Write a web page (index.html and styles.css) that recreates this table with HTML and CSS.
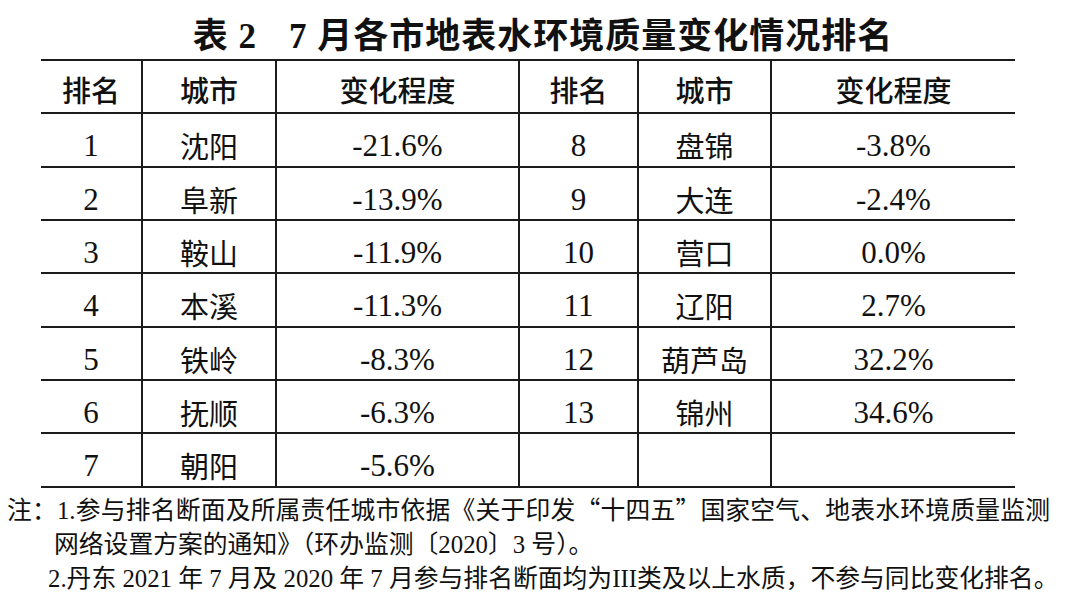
FILE: index.html
```html
<!DOCTYPE html>
<html lang="zh-CN">
<head>
<meta charset="utf-8">
<title>表2 7月各市地表水环境质量变化情况排名</title>
<link rel="stylesheet" href="styles.css">
</head>
<body>
<div class="page">
  <h1 class="title">表 2<span class="gap"></span>7 月各市地表水环境质量变化情况排名</h1>
  <table class="rank">
    <colgroup>
      <col class="c1"><col class="c2"><col class="c3"><col class="c4"><col class="c5"><col class="c6">
    </colgroup>
    <thead>
      <tr><th>排名</th><th>城市</th><th>变化程度</th><th>排名</th><th>城市</th><th>变化程度</th></tr>
    </thead>
    <tbody>
      <tr><td class="num">1</td><td class="city">沈阳</td><td class="num">-21.6%</td><td class="num">8</td><td class="city">盘锦</td><td class="num">-3.8%</td></tr>
      <tr><td class="num">2</td><td class="city">阜新</td><td class="num">-13.9%</td><td class="num">9</td><td class="city">大连</td><td class="num">-2.4%</td></tr>
      <tr><td class="num">3</td><td class="city">鞍山</td><td class="num">-11.9%</td><td class="num">10</td><td class="city">营口</td><td class="num">0.0%</td></tr>
      <tr><td class="num">4</td><td class="city">本溪</td><td class="num">-11.3%</td><td class="num">11</td><td class="city">辽阳</td><td class="num">2.7%</td></tr>
      <tr><td class="num">5</td><td class="city">铁岭</td><td class="num">-8.3%</td><td class="num">12</td><td class="city">葫芦岛</td><td class="num">32.2%</td></tr>
      <tr><td class="num">6</td><td class="city">抚顺</td><td class="num">-6.3%</td><td class="num">13</td><td class="city">锦州</td><td class="num">34.6%</td></tr>
      <tr><td class="num">7</td><td class="city">朝阳</td><td class="num">-5.6%</td><td></td><td></td><td></td></tr>
    </tbody>
  </table>
  <div class="notes">
    <div class="line first">注：1.参与排名断面及所属责任城市依据《关于印发<span class="q">“</span>十四五<span class="q">”</span>国家空气、地表水环境质量监测</div>
    <div class="line second">网络设置方案的通知》（环办监测〔2020〕3 号）。</div>
    <div class="line third">2.丹东 2021 年 7 月及 2020 年 7 月参与排名断面均为III类及以上水质，不参与同比变化排名。</div>
  </div>
</div>
</body>
</html>
```
FILE: styles.css
```css
html, body {
  margin: 0;
  padding: 0;
  background: #ffffff;
  color: #111111;
}

.page {
  width: 1080px;
  height: 605px;
  overflow: hidden;
}

.title {
  margin: 0;
  padding-top: 15px;
  height: 44px;
  line-height: 44px;
  text-align: center;
  font-family: "Liberation Serif", "Noto Sans CJK SC", serif;
  font-weight: 700;
  font-size: 35px;
  letter-spacing: 1px;
  padding-left: 6px;
}

.title .gap {
  display: inline-block;
  width: 32px;
}

.rank {
  margin-left: 41px;
  width: 974px;
  border-collapse: collapse;
  table-layout: fixed;
  font-family: "Liberation Serif", "Noto Sans CJK SC", serif;
}

.c1 { width: 101px; }
.c2 { width: 134px; }
.c3 { width: 243px; }
.c4 { width: 119px; }
.c5 { width: 133px; }
.c6 { width: 244px; }

.rank th,
.rank td {
  padding: 0;
  text-align: center;
  vertical-align: middle;
  border: 2px solid #1c1c1c;
}

.rank th:first-child,
.rank td:first-child {
  border-left: none;
}

.rank th:last-child,
.rank td:last-child {
  border-right: none;
}

.rank th {
  height: 45px;
  font-family: "Noto Sans CJK SC", sans-serif;
  font-weight: 500;
  font-size: 29px;
  line-height: 1;
  padding-top: 6px;
}

.rank td {
  height: 40px;
  padding-top: 11px;
}

.rank tbody tr:nth-child(3n+1) td {
  height: 41px;
}

.rank td.num {
  font-size: 31px;
  line-height: 1;
}

.rank td.city {
  font-family: "Noto Sans CJK SC", sans-serif;
  font-weight: 400;
  font-size: 29px;
  line-height: 1;
}

.notes {
  margin-top: 3px;
  font-family: "Liberation Serif", "Noto Sans CJK SC", serif;
  font-size: 24.8px;
  line-height: 34px;
}

.notes .q {
  font-family: "Noto Sans CJK SC", sans-serif;
}

.notes .line {
  white-space: nowrap;
}

.notes .first {
  margin-left: 7px;
  width: 1043px;
  white-space: normal;
  text-align: justify;
  text-align-last: justify;
}

.notes .second {
  margin-left: 54px;
}

.notes .third {
  margin-left: 48px;
}
```
